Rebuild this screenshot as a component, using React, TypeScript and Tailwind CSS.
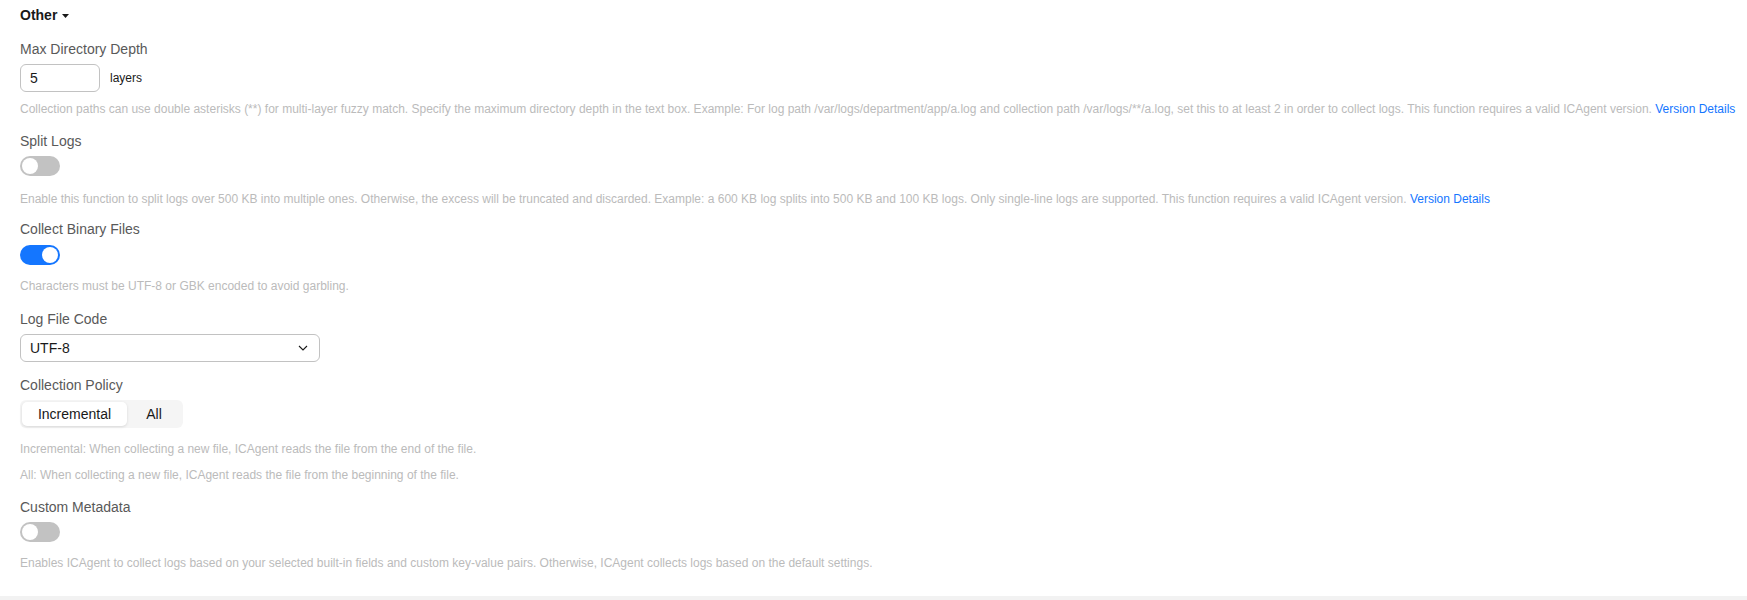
import React, { useState } from 'react';

const font = { fontFamily: '"Liberation Sans", Arial, sans-serif' };

function Toggle({ on, onChange }: { on: boolean; onChange: () => void }) {
  return (
    <button
      type="button"
      onClick={onChange}
      className={`relative block h-5 w-10 rounded-full transition-colors ${on ? 'bg-[#1476ff]' : 'bg-[#c2c2c2]'}`}
    >
      <span
        className={`absolute top-[2px] h-4 w-4 rounded-full bg-white transition-all ${on ? 'left-[22px]' : 'left-[2px]'}`}
      />
    </button>
  );
}

function Label({ children, className = '' }: { children: React.ReactNode; className?: string }) {
  return <div className={`text-[14px] leading-5 text-[#595959] ${className}`}>{children}</div>;
}

function Help({ children, className = '' }: { children: React.ReactNode; className?: string }) {
  return <div className={`whitespace-nowrap text-[12px] leading-[18px] text-[#bbbbbb] ${className}`}>{children}</div>;
}

function VersionLink() {
  return (
    <a href="#" className="text-[#1476ff] hover:underline">
      Version Details
    </a>
  );
}

export default function App() {
  const [depth, setDepth] = useState('5');
  const [split, setSplit] = useState(false);
  const [binary, setBinary] = useState(true);
  const [meta, setMeta] = useState(false);
  const [policy, setPolicy] = useState<'inc' | 'all'>('inc');

  return (
    <div className="min-h-screen bg-white" style={font}>
      <div className="flex flex-col items-start pl-5 pt-[5px] pb-6">
        {/* Section title */}
        <button type="button" className="flex items-center gap-[5px] text-[14px] font-bold leading-5 text-[#191919]">
          Other
          <svg width="7" height="4" viewBox="0 0 7 4" className="mt-[1px]">
            <path d="M0 0h7L3.5 4z" fill="#191919" />
          </svg>
        </button>

        {/* Max Directory Depth */}
        <Label className="mt-[14px]">Max Directory Depth</Label>
        <div className="mt-[5px] flex items-center gap-[10px]">
          <input
            value={depth}
            onChange={(e) => setDepth(e.target.value)}
            className="h-[28px] w-[80px] rounded-[6px] border border-[#c2c2c2] px-[9px] text-[14px] text-[#191919] outline-none focus:border-[#1476ff]"
          />
          <span className="text-[12px] text-[#191919]">layers</span>
        </div>
        <Help className="mt-[8px]">
          Collection paths can use double asterisks (**) for multi-layer fuzzy match. Specify the maximum directory depth in the text box. Example: For log path /var/logs/department/app/a.log and collection path /var/logs/**/a.log, set this to at least 2 in order to collect logs. This function requires a valid ICAgent version.{' '}
          <VersionLink />
        </Help>

        {/* Split Logs */}
        <Label className="mt-[13px]">Split Logs</Label>
        <div className="mt-[5px]">
          <Toggle on={split} onChange={() => setSplit(!split)} />
        </div>
        <Help className="mt-[14px]">
          Enable this function to split logs over 500 KB into multiple ones. Otherwise, the excess will be truncated and discarded. Example: a 600 KB log splits into 500 KB and 100 KB logs. Only single-line logs are supported. This function requires a valid ICAgent version.{' '}
          <VersionLink />
        </Help>

        {/* Collect Binary Files */}
        <Label className="mt-[11px]">Collect Binary Files</Label>
        <div className="mt-[6px]">
          <Toggle on={binary} onChange={() => setBinary(!binary)} />
        </div>
        <Help className="mt-[12px]">Characters must be UTF-8 or GBK encoded to avoid garbling.</Help>

        {/* Log File Code */}
        <Label className="mt-[14px]">Log File Code</Label>
        <button
          type="button"
          className="mt-[5px] flex h-[28px] w-[300px] items-center justify-between rounded-[6px] border border-[#c2c2c2] pl-[9px] pr-[11px] text-[14px] text-[#191919]"
        >
          <span>UTF-8</span>
          <svg width="10" height="6" viewBox="0 0 10 6" fill="none">
            <path d="M1 1l4 4 4-4" stroke="#191919" strokeWidth="1.1" />
          </svg>
        </button>

        {/* Collection Policy */}
        <Label className="mt-[13px]">Collection Policy</Label>
        <div className="mt-[5px] flex h-[28px] items-center rounded-[6px] bg-[#f5f5f5] p-[2px]">
          <button
            type="button"
            onClick={() => setPolicy('inc')}
            className={`h-6 w-[105px] rounded-[5px] text-[14px] text-[#191919] ${policy === 'inc' ? 'bg-white shadow-[0_1px_3px_rgba(0,0,0,0.12)]' : ''}`}
          >
            Incremental
          </button>
          <button
            type="button"
            onClick={() => setPolicy('all')}
            className={`h-6 w-[54px] rounded-[5px] text-[14px] text-[#191919] ${policy === 'all' ? 'bg-white shadow-[0_1px_3px_rgba(0,0,0,0.12)]' : ''}`}
          >
            All
          </button>
        </div>
        <Help className="mt-[12px]">Incremental: When collecting a new file, ICAgent reads the file from the end of the file.</Help>
        <Help className="mt-[8px]">All: When collecting a new file, ICAgent reads the file from the beginning of the file.</Help>

        {/* Custom Metadata */}
        <Label className="mt-[13px]">Custom Metadata</Label>
        <div className="mt-[5px]">
          <Toggle on={meta} onChange={() => setMeta(!meta)} />
        </div>
        <Help className="mt-[12px]">
          Enables ICAgent to collect logs based on your selected built-in fields and custom key-value pairs. Otherwise, ICAgent collects logs based on the default settings.
        </Help>
      </div>
      <div className="h-[40px] bg-[#f2f2f2]" />
    </div>
  );
}
